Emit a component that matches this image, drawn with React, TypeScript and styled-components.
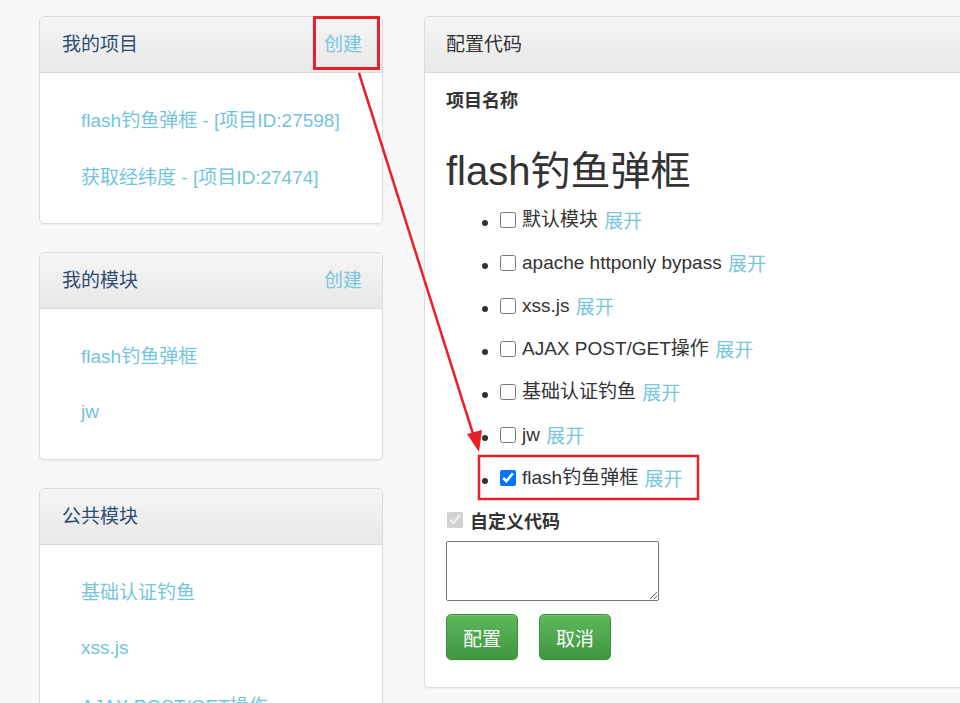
import React from "react";
import styled, { createGlobalStyle } from "styled-components";

const Global = createGlobalStyle`
  html, body { margin: 0; padding: 0; }
  body {
    background: #f8f8f8;
    font-family: "Liberation Sans", "Noto Sans CJK SC", sans-serif;
    color: #333;
    overflow: hidden;
    width: 960px;
    height: 703px;
  }
`;

const Page = styled.div`
  position: relative;
  display: flex;
  align-items: flex-start;
  gap: 41px;
  padding: 16px 0 0 39px;
  width: 1400px;
`;

const Column = styled.div`
  display: flex;
  flex-direction: column;
  gap: 28px;
  width: 344px;
  flex: none;
`;

const Panel = styled.div<{ $wide?: boolean }>`
  background: #fff;
  border: 1px solid #dcdcdc;
  border-radius: 5px;
  box-shadow: 0 1px 2px rgba(0, 0, 0, 0.06);
  overflow: hidden;
  width: ${(p) => (p.$wide ? "700px" : "auto")};
  flex: none;
`;

const Heading = styled.div<{ $dark?: boolean }>`
  height: 56px;
  box-sizing: border-box;
  display: flex;
  align-items: center;
  justify-content: space-between;
  padding: 0 20px 0 ${(p) => (p.$dark ? "21px" : "22px")};
  background: linear-gradient(to bottom, #f5f5f5 0, #e8e8e8 100%);
  border-bottom: 1px solid #dadada;
  font-size: 19px;
  line-height: 1;
  color: ${(p) => (p.$dark ? "#333" : "#2f4c72")};
`;

const Create = styled.a`
  color: #79c6dd;
  text-decoration: none;
  font-size: 19px;
`;

const LinkList = styled.div`
  display: flex;
  flex-direction: column;
  padding: 17px 0 19px 41px;
`;

const LinkItem = styled.a`
  display: flex;
  align-items: center;
  height: 57px;
  color: #74c4dd;
  font-size: 19px;
  text-decoration: none;
`;

const Body = styled.div`
  padding: 16px 21px 27px;
`;

const Label = styled.div`
  font-size: 18px;
  font-weight: bold;
  line-height: 25px;
  color: #333;
`;

const Title = styled.h1`
  font-size: 40px;
  font-weight: normal;
  line-height: 44px;
  margin: 35px 0 5px;
  color: #333;
`;

const Modules = styled.ul`
  margin: 0;
  padding-left: 54px;
  list-style: disc;
`;

const Module = styled.li`
  height: 43px;
  font-size: 19px;
  line-height: 43px;
  color: #333;
`;

const Row = styled.label`
  display: inline-flex;
  align-items: center;
  gap: 6px;
`;

const Check = styled.input`
  width: 16px;
  height: 16px;
  margin: 0;
`;

const Expand = styled.a`
  color: #79c6dd;
  text-decoration: none;
  margin-left: 1px;
`;

const CustomRow = styled.label`
  display: flex;
  align-items: center;
  gap: 7px;
  height: 25px;
  margin-top: 8px;
  padding-left: 1px;
  font-size: 18px;
  font-weight: bold;
`;

const Code = styled.textarea`
  display: block;
  width: 213px;
  height: 60px;
  box-sizing: border-box;
  margin-top: 9px;
  border: 1px solid #767676;
  border-radius: 2px;
`;

const Buttons = styled.div`
  display: flex;
  gap: 21px;
  margin-top: 13px;
`;

const GreenButton = styled.button`
  width: 72px;
  height: 46px;
  border: 1px solid #3e8f3e;
  border-radius: 5px;
  background: linear-gradient(to bottom, #5cb85c 0, #419641 100%);
  box-shadow: inset 0 1px 0 rgba(255, 255, 255, 0.15), 0 1px 1px rgba(0, 0, 0, 0.075);
  color: #fff;
  font-family: inherit;
  font-size: 19px;
  padding: 0;
`;

const Overlay = styled.svg`
  position: absolute;
  left: 0;
  top: 0;
  pointer-events: none;
`;

const myProjects = ["flash钓鱼弹框 - [项目ID:27598]", "获取经纬度 - [项目ID:27474]"];
const myModules = ["flash钓鱼弹框", "jw"];
const publicModules = ["基础认证钓鱼", "xss.js", "AJAX POST/GET操作"];
const modules = [
  { name: "默认模块", checked: false },
  { name: "apache httponly bypass", checked: false },
  { name: "xss.js", checked: false },
  { name: "AJAX POST/GET操作", checked: false },
  { name: "基础认证钓鱼", checked: false },
  { name: "jw", checked: false },
  { name: "flash钓鱼弹框", checked: true },
];

export default function App() {
  return (
    <>
      <Global />
      <Page>
        <Column>
          <Panel>
            <Heading>
              我的项目<Create href="#">创建</Create>
            </Heading>
            <LinkList>
              {myProjects.map((t) => (
                <LinkItem key={t} href="#">{t}</LinkItem>
              ))}
            </LinkList>
          </Panel>
          <Panel>
            <Heading>
              我的模块<Create href="#">创建</Create>
            </Heading>
            <LinkList>
              {myModules.map((t) => (
                <LinkItem key={t} href="#">{t}</LinkItem>
              ))}
            </LinkList>
          </Panel>
          <Panel>
            <Heading>公共模块</Heading>
            <LinkList>
              {publicModules.map((t) => (
                <LinkItem key={t} href="#">{t}</LinkItem>
              ))}
            </LinkList>
          </Panel>
        </Column>
        <Panel $wide>
          <Heading $dark>配置代码</Heading>
          <Body>
            <Label>项目名称</Label>
            <Title>flash钓鱼弹框</Title>
            <Modules>
              {modules.map((m) => (
                <Module key={m.name}>
                  <Row>
                    <Check type="checkbox" defaultChecked={m.checked} />
                    {m.name}
                  </Row>{" "}
                  <Expand href="#">展开</Expand>
                </Module>
              ))}
            </Modules>
            <CustomRow>
              <Check type="checkbox" defaultChecked disabled />
              自定义代码
            </CustomRow>
            <Code />
            <Buttons>
              <GreenButton>配置</GreenButton>
              <GreenButton>取消</GreenButton>
            </Buttons>
          </Body>
        </Panel>
        <Overlay width="960" height="703" viewBox="0 0 960 703">
          <rect x="314.5" y="17.5" width="64" height="51" fill="none" stroke="#e8202a" strokeWidth="3" />
          <rect x="479" y="456" width="219" height="43" fill="none" stroke="#e8202a" strokeWidth="2.5" />
          <line x1="359" y1="73" x2="474" y2="437" stroke="#e8202a" strokeWidth="2.5" />
          <polygon points="479,452 467,434 482,430" fill="#e8202a" />
        </Overlay>
      </Page>
    </>
  );
}
